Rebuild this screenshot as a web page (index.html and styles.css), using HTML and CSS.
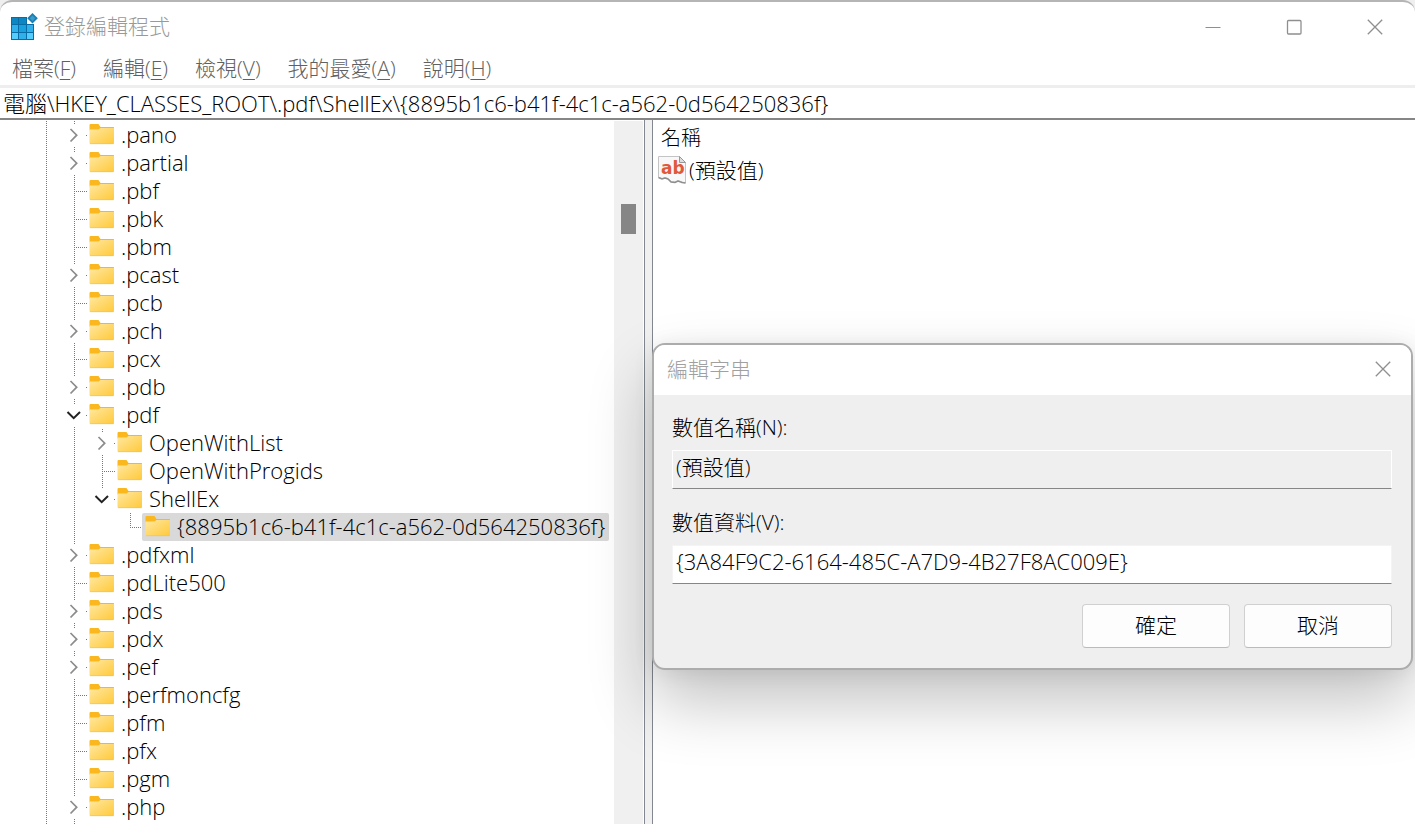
FILE: index.html
```
<!DOCTYPE html>
<html lang="zh-Hant">
<head>
<meta charset="utf-8">
<meta name="viewport" content="width=device-width, initial-scale=1">
<title>登錄編輯程式</title>
<link rel="stylesheet" href="styles.css">
</head>
<body>
<svg class="defs" aria-hidden="true">
  <defs>
    <linearGradient id="fold" x1="0" y1="0" x2="1" y2="1">
      <stop offset="0" stop-color="#ffe8a0"/><stop offset="1" stop-color="#ffc93a"/>
    </linearGradient>
    <symbol id="folder" viewBox="0 0 26 22">
      <path d="M1.500 0h8l2 3H24.500q.5 0 .5.5v3H.5V1q0-1 1-1z" fill="#fab81e"/>
      <path d="M.5 5.500h9L11.500 4H25v15q0 1-1 1H1.500q-1 0-1-1z" fill="url(#fold)"/>
      <path d="M1 19.700h23.500" stroke="#f3c14a" stroke-width=".6"/>
    </symbol>
    <symbol id="closed" viewBox="0 0 22 22"><path d="M8.500 5l6.200 6.200L8.500 17.500" fill="none" stroke="#8c8c8c" stroke-width="1.700"/></symbol>
    <symbol id="open" viewBox="0 0 22 22"><path d="M5.500 8l6.200 6.200L18 8" fill="none" stroke="#222" stroke-width="2"/></symbol>
    <symbol id="cross" viewBox="0 0 16 16"><path d="M.8.8l14.400 14.400M15.200.8L.8 15.200" fill="none" stroke="#8f8f8f" stroke-width="1.300"/></symbol>
  </defs>
</svg>
<div class="app">
  <header class="titlebar">
    <svg class="logo" viewBox="0 0 28 30" aria-hidden="true">
      <path d="M1 5h16v7h7v16H1z" fill="#0a6ca5"/>
      <path d="M2 6h6v6H2zM9 6h7v6H9z" fill="#0c87c4"/>
      <path d="M2 13h6v7H2zM9 21h7v6H9zM17 13h6v7h-6z" fill="#2fb0ea"/>
      <path d="M9 13h7v7H9z" fill="#18a0dd"/>
      <path d="M2 21h6v6H2zM17 21h6v6h-6z" fill="#55cdfc"/>
      <path d="M22.500 .5L28 6l-5.500 6L17 6z" fill="#fff"/>
      <path d="M22.500 1l5.300 5.300-5.300 5.300-5.300-5.300z" fill="#1a7fb5"/>
      <path d="M22.500 3.500L25.200 6.300l-2.700 2.700-2.700-2.700z" fill="#3b9bcb"/>
    </svg>
    <h1>登錄編輯程式</h1>
    <div class="controls">
      <button aria-label="最小化"><svg viewBox="0 0 16 16"><path d="M.5 8.500h15" stroke="#8f8f8f"/></svg></button>
      <button aria-label="最大化"><svg viewBox="0 0 16 16"><rect x="1.500" y="1.500" width="13.500" height="13.500" rx="1" fill="none" stroke="#8f8f8f" stroke-width="1.300"/></svg></button>
      <button aria-label="關閉"><svg><use href="#cross"/></svg></button>
    </div>
  </header>
  <nav class="menu">
    <button>檔案(<u>F</u>)</button>
    <button>編輯(<u>E</u>)</button>
    <button>檢視(<u>V</u>)</button>
    <button>我的最愛(<u>A</u>)</button>
    <button>說明(<u>H</u>)</button>
  </nav>
  <input class="address" aria-label="路徑" value="電腦\HKEY_CLASSES_ROOT\.pdf\ShellEx\{8895b1c6-b41f-4c1c-a562-0d564250836f}">
  <main class="panes">
    <section class="left">
      <ul class="tree" id="tree"></ul>
      <div class="scroll"><div class="thumb"></div></div>
    </section>
    <div class="splitter"></div>
    <section class="right">
      <table class="values">
        <thead><tr><th scope="col">名稱</th></tr></thead>
        <tbody><tr><td><div class="value">
          <svg class="abicon" viewBox="0 0 28 28" aria-hidden="true">
            <path d="M.5.500h21l6 6v20.500l-3.500-1-4-1.500-3 1.500-4-.5-3-3-3-1-3 1-3.500-1z" fill="#f8f8f8" stroke="#c4c4c4"/>
            <path d="M21.500.500v6h6z" fill="#ddd" stroke="#999"/>
            <path d="M.5 21.500l3.500 1.500 3-1 3 1 3 3 4 .5 3-1.500 4 1.500 3.500.5" fill="none" stroke="#8f8f8f" stroke-width="1.500"/>
            <text x="3" y="18">ab</text>
          </svg><span>(預設值)</span></div></td></tr></tbody>
      </table>
      <form class="dialog" role="dialog" aria-labelledby="dlg">
        <div class="dialog-title"><h2 id="dlg">編輯字串</h2><button type="button" aria-label="關閉"><svg><use href="#cross"/></svg></button></div>
        <div class="dialog-body">
          <label for="name">數值名稱(N):</label>
          <input id="name" class="readonly" readonly value="(預設值)">
          <label for="data">數值資料(V):</label>
          <input id="data" value="{3A84F9C2-6164-485C-A7D9-4B27F8AC009E}">
          <div class="actions"><button type="button">確定</button><button type="button">取消</button></div>
        </div>
      </form>
    </section>
  </main>
</div>
<script src="tree.js"></script>
</body>
</html>
```
FILE: styles.css
```
* { box-sizing: border-box; }
body {
  margin: 0;
  background: #efefef;
  color: #000;
  font: 300 21px/28px "Open Sans", "Noto Sans CJK TC", sans-serif;
}
button, input { font: inherit; color: inherit; margin: 0; }
button { border: 0; background: none; padding: 0; }
h1, h2 { margin: 0; font: inherit; }
.defs { position: absolute; width: 0; height: 0; }
.app {
  display: flex;
  flex-direction: column;
  height: 100vh;
  overflow: hidden;
  background: #fff;
  border-top: 2px solid #b5b5b5;
  border-radius: 12px 12px 0 0;
}
.titlebar { display: flex; align-items: center; flex: none; height: 50px; padding-left: 10px; color: #999; }
.logo { width: 28px; height: 30px; margin-right: 6px; }
.titlebar h1 { padding-bottom: 2px; }
.controls { display: flex; margin-left: auto; }
.controls button { width: 81px; height: 50px; display: grid; place-items: center; }
.controls svg, .dialog-title svg { width: 16px; height: 16px; }
.menu { display: flex; flex: none; gap: 27px; height: 33px; padding: 0 12px 2px; color: #606060; align-items: center; }
.menu u { text-underline-offset: 3px; text-decoration-thickness: 1px; }
.address {
  flex: none;
  width: 100%;
  height: 35px;
  padding: 0 3px 3px;
  border: 0;
  border-top: 3px solid #eee;
  border-bottom: 2px solid #868686;
  font-size: 22px;
  background: #fff;
  outline: 0;
}
.panes { display: flex; flex: 1; min-height: 0; }
.left { display: flex; flex: none; width: 644px; padding-top: 1px; }
.tree {
  flex: 1;
  margin: 0;
  padding: 0 0 0 32px;
  list-style: none;
  overflow: hidden;
  font-size: 22px;
  background:
    repeating-linear-gradient(#777 0 1px, #fff 1px 2px) 46px 0 / 1px 100% no-repeat,
    repeating-linear-gradient(#777 0 1px, #fff 1px 2px) 74px 0 / 1px 100% no-repeat;
}
.row { display: flex; align-items: center; height: 28px; }
.gap { flex: none; width: 28px; height: 28px; }
.branch {
  flex: none;
  width: 28px;
  height: 28px;
  padding: 3px 2px;
  background: repeating-linear-gradient(90deg, #777 0 1px, #fff 1px 2px) 14px 14px / 13px 1px no-repeat;
}
.branch.through {
  background:
    repeating-linear-gradient(90deg, #777 0 1px, #fff 1px 2px) 14px 14px / 13px 1px no-repeat,
    repeating-linear-gradient(#777 0 1px, #fff 1px 2px) 14px 0 / 1px 28px no-repeat;
}
.branch.end {
  background:
    repeating-linear-gradient(90deg, #777 0 1px, #fff 1px 2px) 14px 14px / 13px 1px no-repeat,
    repeating-linear-gradient(#777 0 1px, #fff 1px 2px) 14px 0 / 1px 14px no-repeat;
}
.branch svg { display: block; width: 24px; height: 22px; padding-right: 2px; background: #fff; }
.item { display: flex; align-items: center; height: 28px; margin-left: -2px; padding: 0 4px 2px 3px; border-radius: 2px; white-space: nowrap; }
.item.selected { background: #d9d9d9; }
.item svg { width: 26px; height: 22px; margin: 2px 6px 0 0; }
.scroll { flex: none; width: 30px; padding: 83px 7px 0; background: #f0f0f0; border-right: 1px solid #fff; }
.thumb { height: 30px; background: #868686; }
.splitter { flex: none; width: 9px; background: #f0f0f0; border: solid #828790; border-width: 0 1px; }
.right { position: relative; flex: 1; min-width: 0; }
.values { border-collapse: collapse; }
.values th { font-weight: 300; font-size: 20px; text-align: left; padding: 4px 8px 0; }
.values td { padding: 4px 5px; }
.value { display: flex; align-items: center; gap: 3px; }
.abicon { width: 28px; height: 28px; }
.abicon text { font: bold 17px "DejaVu Sans", sans-serif; fill: #e0593a; }
.dialog {
  position: absolute;
  top: 223px;
  left: -1px;
  right: 2px;
  border: 2px solid #acacac;
  border-radius: 13px;
  background: #efefef;
  background-clip: padding-box;
  box-shadow: 0 32px 64px rgba(0, 0, 0, .24), 0 2px 20px rgba(0, 0, 0, .08);
}
.dialog-title {
  display: flex;
  justify-content: space-between;
  align-items: center;
  height: 50px;
  padding: 0 20px 2px 13px;
  background: #fff;
  border-radius: 11px 11px 0 0;
  color: #a0a0a0;
}
.dialog-title button { display: grid; }
.dialog-body { display: flex; flex-direction: column; padding: 18px 19px 20px 18px; }
.dialog-body input {
  width: 100%;
  height: 39px;
  margin: 9px 0 19px;
  padding: 0 3px 8px;
  border: 1px solid #f4f4f4;
  border-bottom-color: #868686;
  background: #fff;
  outline: 0;
  font-size: 22px;
}
.dialog-body .readonly { background: #efefef; border-color: #fff #fff #868686; font-size: 21px; }
.actions { display: flex; justify-content: flex-end; gap: 14px; padding-top: 1px; }
.actions button { width: 148px; height: 44px; padding-bottom: 2px; border: 1px solid #d0d0d0; border-bottom-color: #bbb; border-radius: 4px; background: #fdfdfd; }
```
FILE: tree.js
```
// Each key: name, depth, expander state, whether it is the last child.
const keys = [
  [".pano", 0, "closed"], [".partial", 0, "closed"], [".pbf", 0], [".pbk", 0], [".pbm", 0],
  [".pcast", 0, "closed"], [".pcb", 0], [".pch", 0, "closed"], [".pcx", 0], [".pdb", 0, "closed"],
  [".pdf", 0, "open"], ["OpenWithList", 1, "closed"], ["OpenWithProgids", 1], ["ShellEx", 1, "open", true],
  ["{8895b1c6-b41f-4c1c-a562-0d564250836f}", 2, "", true],
  [".pdfxml", 0, "closed"], [".pdLite500", 0], [".pds", 0, "closed"], [".pdx", 0, "closed"],
  [".pef", 0, "closed"], [".perfmoncfg", 0], [".pfm", 0], [".pfx", 0], [".pgm", 0], [".php", 0, "closed"]
];
document.getElementById("tree").innerHTML = keys.map(([name, depth, state, last]) => {
  const line = depth ? (last ? "end" : "through") : "";
  const icon = state ? `<svg><use href="#${state}"/></svg>` : "";
  return `<li class="row">${'<span class="gap"></span>'.repeat(depth + 1)}` +
    `<span class="branch ${line}">${icon}</span>` +
    `<span class="item ${depth === 2 ? "selected" : ""}"><svg><use href="#folder"/></svg>${name}</span></li>`;
}).join("");
```
